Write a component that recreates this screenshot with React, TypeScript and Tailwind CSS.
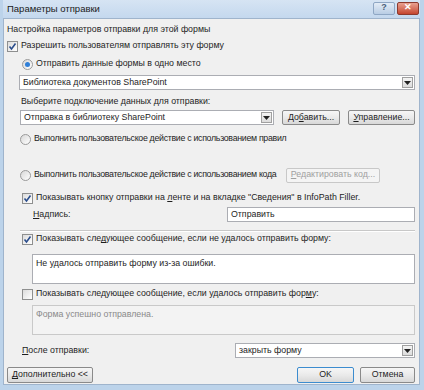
import React from 'react';

const font = { fontFamily: '"Liberation Sans", "Noto Sans", sans-serif' };

function Check({ checked, children }: { checked?: boolean; children: React.ReactNode }) {
  return (
    <div className="flex items-center gap-[3px]">
      <div className="w-[11px] h-[11px] shrink-0 border border-[#8e8f8f] bg-gradient-to-br from-[#dcdcdc] to-white flex items-center justify-center">
        {checked && (
          <svg width="9" height="9" viewBox="0 0 9 9">
            <path d="M1.5 4.5 L3.5 7 L7.5 1.5" stroke="#2a4d8c" strokeWidth="1.6" fill="none" />
          </svg>
        )}
      </div>
      <span>{children}</span>
    </div>
  );
}

function Radio({ checked, children }: { checked?: boolean; children: React.ReactNode }) {
  return (
    <div className="flex items-center gap-[3px]">
      <div className="w-[11px] h-[11px] shrink-0 rounded-full border border-[#9a9a9a] bg-gradient-to-br from-[#d8d8d8] to-white flex items-center justify-center">
        {checked && <div className="w-[5px] h-[5px] rounded-full bg-[#2f7fd8]" />}
      </div>
      <span>{children}</span>
    </div>
  );
}

function Combo({ value, className }: { value: string; className?: string }) {
  return (
    <div className={'flex items-center h-[15px] border border-[#abadb3] bg-white pl-[3px] pr-[1px] ' + (className ?? '')}>
      <span className="flex-1">{value}</span>
      <div className="w-[11px] h-[11px] border border-[#a0a0a0] bg-gradient-to-b from-[#f4f4f4] to-[#dcdcdc] flex items-center justify-center">
        <svg width="7" height="4" viewBox="0 0 7 4">
          <path d="M0 0 H7 L3.5 4 Z" fill="#222" />
        </svg>
      </div>
    </div>
  );
}

function Btn({ children, className, disabled }: { children: React.ReactNode; className?: string; disabled?: boolean }) {
  return (
    <div
      className={
        'flex items-center justify-center shrink-0 rounded-[2px] border ' +
        (disabled
          ? 'border-[#c8c8c8] bg-[#f4f4f4] text-[#a0a0a0] '
          : 'border-[#8a8a8a] bg-gradient-to-b from-[#f6f6f6] via-[#eaeaea] to-[#d8d8d8] ') +
        (className ?? '')
      }
    >
      {children}
    </div>
  );
}

export default function App() {
  return (
    <div className="w-[424px] h-[390px] bg-[#bcd3ea] pl-[3px] pr-[4px] pb-[5px] flex flex-col text-[8.8px] text-[#1e1e1e] whitespace-nowrap" style={font}>
      <div className="h-[18px] shrink-0 flex items-center justify-between bg-gradient-to-b from-[#d6e4f3] to-[#c4d8ee]">
        <span className="pl-[4px] text-[9.5px] text-[#1a1a1a]">Параметры отправки</span>
        <div className="flex gap-[2px] pr-[1px] pb-[2px]">
          <div className="w-[22px] h-[13px] rounded-[2px] border border-[#8fa7c4] bg-gradient-to-b from-[#e3ecf6] to-[#b9cde4] flex items-center justify-center text-[9px] text-[#4a5f7a] font-bold">?</div>
          <div className="w-[22px] h-[13px] rounded-[2px] border border-[#8c3a2e] bg-gradient-to-b from-[#e8a090] to-[#c4442e] flex items-center justify-center text-[9px] text-white font-bold">✕</div>
        </div>
      </div>
      <div className="flex-1 bg-[#f0f0f0] border border-[#9fb4cc] pl-[3px] pr-[4px] flex flex-col">
        <div className="mt-[5px] h-[12px] flex items-center">Настройка параметров отправки для этой формы</div>
        <div className="mt-[3px] h-[14px] flex items-center">
          <Check checked>Разрешить пользователям отправлять эту форму</Check>
        </div>
        <div className="mt-[4px] h-[14px] flex items-center pl-[15px]">
          <Radio checked>Отправить данные формы в одно место</Radio>
        </div>
        <Combo value="Библиотека документов SharePoint" className="mt-[4px] ml-[12px]" />
        <div className="mt-[6px] h-[12px] flex items-center pl-[14px]">Выберите подключение данных для отправки:</div>
        <div className="mt-[2px] h-[15px] flex items-center ml-[13px] gap-[8px]">
          <Combo value="Отправка в библиотеку SharePoint" className="w-[256px]" />
          <Btn className="w-[58px] h-[15px]">
            <span>До<u>б</u>авить...</span>
          </Btn>
          <Btn className="w-[67px] h-[15px]">
            <span><u>У</u>правление...</span>
          </Btn>
        </div>
        <div className="mt-[7px] h-[14px] flex items-center pl-[13px] tracking-[-0.3px]">
          <Radio>Выполнить пользовательское действие с использованием правил</Radio>
        </div>
        <div className="mt-[21px] h-[16px] flex items-center pl-[13px] pr-[35px]">
          <div className="flex-1 tracking-[-0.3px]">
            <Radio>Выполнить пользовательское действие с использованием кода</Radio>
          </div>
          <Btn disabled className="w-[94px] h-[15px]">
            <span><u>Р</u>едактировать код...</span>
          </Btn>
        </div>
        <div className="mt-[8px] h-[14px] flex items-center pl-[15px]">
          <Check checked>
            Показывать кнопку отправки на <u>л</u>енте и на вкладке "Сведения" в InfoPath Filler.
          </Check>
        </div>
        <div className="mt-[2px] h-[15px] flex items-center pl-[26px]">
          <span className="flex-1"><u>Н</u>адпись:</span>
          <div className="w-[188px] h-[15px] border border-[#abadb3] bg-white flex items-center pl-[3px]">Отправить</div>
        </div>
        <div className="mt-[8px] ml-[13px] h-[2px] border-t border-[#c8c8c8] border-b border-b-white" />
        <div className="mt-[0px] h-[14px] flex items-center pl-[15px]">
          <Check checked>
            Показывать сле<u>д</u>ующее сообщение, если не удалось отправить форму:
          </Check>
        </div>
        <div className="mt-[8px] ml-[25px] h-[30px] border border-[#abadb3] bg-white px-[3px] pt-[2px]">
          Не удалось отправить форму из-за ошибки.
        </div>
        <div className="mt-[3px] h-[14px] flex items-center pl-[15px]">
          <Check>
            Показывать следующее сообщение, если удалось отправить фор<u>м</u>у:
          </Check>
        </div>
        <div className="mt-[4px] ml-[25px] h-[30px] border border-[#c9c9c9] bg-[#f3f3f3] text-[#8a8a8a] px-[3px] pt-[2px]">
          Форма успешно отправлена.
        </div>
        <div className="mt-[8px] h-[15px] flex items-center pl-[15px]">
          <span className="flex-1"><u>П</u>осле отправки:</span>
          <Combo value="закрыть форму" className="w-[180px]" />
        </div>
        <div className="mt-[9px] h-[16px] flex items-center">
          <Btn className="w-[86px] h-[16px]">
            <span><u>Д</u>ополнительно &lt;&lt;</span>
          </Btn>
          <div className="flex-1" />
          <Btn className="w-[57px] h-[16px] !border-[#3c8ccf]">
            <span>OK</span>
          </Btn>
          <Btn className="w-[55px] h-[16px] ml-[6px]">
            <span>Отмена</span>
          </Btn>
        </div>
      </div>
    </div>
  );
}
